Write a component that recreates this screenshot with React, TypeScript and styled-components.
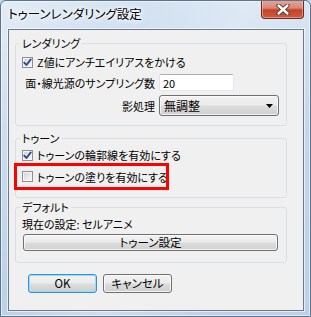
import styled, { createGlobalStyle } from 'styled-components'

const GlobalStyle = createGlobalStyle`
  html, body {
    margin: 0;
    padding: 0;
    background: #c4d7ea;
  }
  body {
    font-family: "Noto Sans CJK JP", "Noto Sans", sans-serif;
    font-feature-settings: "palt";
    color: #000;
  }
`

const Window = styled.div`
  width: 311px;
  height: 317px;
  box-sizing: border-box;
  display: flex;
  flex-direction: column;
  border: 1px solid #5d728c;
  border-radius: 6px 6px 0 0;
  background:
    linear-gradient(115deg, rgba(255,255,255,0.35) 0%, rgba(255,255,255,0) 30%, rgba(255,255,255,0.25) 55%, rgba(255,255,255,0) 80%),
    linear-gradient(180deg, #d3e2f1 0%, #c3d6ea 40%, #bcd1e7 100%);
  box-shadow: inset 0 0 0 1px rgba(255,255,255,0.55);
  overflow: hidden;
`

const TitleBar = styled.div`
  height: 28px;
  display: flex;
  align-items: flex-start;
  justify-content: space-between;
  padding: 0 6px 0 7px;
`

const Title = styled.div`
  margin-top: 5px;
  font-size: 12.5px;
  line-height: 16px;
  text-shadow: 0 0 6px #fff, 0 0 10px #fff, 0 0 3px #fff;
`

const CloseButton = styled.div`
  width: 43px;
  height: 19px;
  margin-top: -1px;
  box-sizing: border-box;
  display: flex;
  align-items: center;
  justify-content: center;
  border: 1px solid #6a2a1f;
  border-top: none;
  border-radius: 0 0 4px 4px;
  background: linear-gradient(180deg, #e5a99d 0%, #d88672 45%, #c2432b 55%, #cf5a3e 100%);
  box-shadow: inset 0 0 0 1px rgba(255,220,210,0.45);
`

const Client = styled.div`
  flex: 1;
  margin: 0 6px 5px 7px;
  display: flex;
  flex-direction: column;
  padding: 6px 16px 0 6px;
  border: 1px solid #6b7a8b;
  background: #f0f0f0;
  box-shadow: 0 0 0 1px rgba(255,255,255,0.6);
`

const Group = styled.fieldset<{ $top: number; $bottom: number; $pt: number }>`
  margin: ${p => p.$top}px 0 0 0;
  padding: ${p => p.$pt}px 0 ${p => p.$bottom}px 6px;
  border: 1px solid #d5dfe5;
  border-radius: 3px;
  min-width: 0;
`

const Legend = styled.legend`
  padding: 0 2px;
  margin-left: -2px;
  font-size: 11px;
  line-height: 14px;
`

const GroupBody = styled.div<{ $gap: number }>`
  display: flex;
  flex-direction: column;
  gap: ${p => p.$gap}px;
`

const CheckRow = styled.div<{ $marked?: boolean }>`
  display: flex;
  align-items: center;
  gap: 4px;
  height: ${p => (p.$marked ? 21 : 16)}px;
  font-size: 11px;
  white-space: nowrap;
  ${p =>
    p.$marked &&
    `
    box-sizing: border-box;
    width: 149px;
    margin-left: -5px;
    padding-left: 5px;
    outline: 3px solid #ff0000;
  `}
`

const Box = styled.span`
  width: 11px;
  height: 11px;
  box-sizing: border-box;
  flex: none;
  display: flex;
  align-items: center;
  justify-content: center;
  border: 1px solid #8e8f8f;
  background: linear-gradient(135deg, #cfd2d6 0%, #e8eaec 60%, #fafafa 100%);
  box-shadow: inset 0 0 0 1px #f5f5f5;
`

const FieldRow = styled.div<{ $h: number }>`
  display: grid;
  grid-template-columns: 133px auto;
  column-gap: 4px;
  align-items: center;
  height: ${p => p.$h}px;
  font-size: 11px;
`

const FieldLabel = styled.span`
  justify-self: end;
  white-space: nowrap;
`

const TextInput = styled.input`
  width: 75px;
  height: 17px;
  box-sizing: border-box;
  margin: 0;
  padding: 0 3px;
  border: 1px solid;
  border-color: #abadb3 #e3e9ef #e3e9ef #e2e3ea;
  border-radius: 2px;
  background: #fff;
  font: inherit;
  font-size: 11px;
  color: #000;
  outline: none;
`

const Combo = styled.div`
  width: 120px;
  height: 21px;
  box-sizing: border-box;
  display: flex;
  align-items: center;
  justify-content: space-between;
  padding: 0 5px 0 4px;
  border: 1px solid #707070;
  border-radius: 3px;
  background: linear-gradient(180deg, #f2f2f2 0%, #ebebeb 48%, #dddddd 52%, #cfcfcf 100%);
  box-shadow: inset 0 0 0 1px rgba(255,255,255,0.7);
  font-size: 12px;
`

const Line = styled.div`
  height: 16px;
  display: flex;
  align-items: center;
  font-size: 11px;
  white-space: nowrap;
`

const Button = styled.button<{ $w: number; $h: number; $default?: boolean }>`
  width: ${p => p.$w}px;
  height: ${p => p.$h}px;
  box-sizing: border-box;
  margin: 0;
  padding: 0;
  border: 1px solid ${p => (p.$default ? '#3a8fd0' : '#707070')};
  border-radius: 3px;
  background: linear-gradient(180deg, #f2f2f2 0%, #ebebeb 48%, #dddddd 52%, #cfcfcf 100%);
  box-shadow: inset 0 0 0 1px ${p => (p.$default ? '#8fe0fb' : 'rgba(255,255,255,0.75)')};
  font-family: inherit;
  font-feature-settings: "palt";
  font-size: 11.5px;
  color: #000;
  line-height: 1;
`

const WideButton = styled(Button)`
  margin-left: 1px;
`

const ButtonRow = styled.div`
  display: flex;
  gap: 6px;
  margin-top: 11px;
  padding-left: 13px;
`

function CheckBox({ checked }: { checked?: boolean }) {
  return (
    <Box>
      {checked && (
        <svg width="9" height="9" viewBox="0 0 9 9">
          <path d="M1.2 4.6 L3.5 7 L7.8 1.4" fill="none" stroke="#2b4794" strokeWidth="1.8" strokeLinecap="round" strokeLinejoin="round" />
        </svg>
      )}
    </Box>
  )
}

export default function App() {
  return (
    <>
      <GlobalStyle />
      <Window>
        <TitleBar>
          <Title>トゥーンレンダリング設定</Title>
          <CloseButton>
            <svg width="14" height="11" viewBox="0 0 14 11">
              <path d="M2.5 1.5 L11.5 9.5 M11.5 1.5 L2.5 9.5" stroke="#4a2a24" strokeWidth="4.2" strokeLinecap="round" />
              <path d="M2.5 1.5 L11.5 9.5 M11.5 1.5 L2.5 9.5" stroke="#ffffff" strokeWidth="2.4" strokeLinecap="round" />
            </svg>
          </CloseButton>
        </TitleBar>
        <Client>
          <Group $top={0} $pt={4} $bottom={9}>
            <Legend>レンダリング</Legend>
            <GroupBody $gap={4}>
              <CheckRow>
                <CheckBox checked />
                <span>Z値にアンチエイリアスをかける</span>
              </CheckRow>
              <FieldRow $h={17}>
                <FieldLabel>面・線光源のサンプリング数</FieldLabel>
                <TextInput value="20" readOnly />
              </FieldRow>
              <FieldRow $h={21}>
                <FieldLabel>影処理</FieldLabel>
                <Combo>
                  <span>無調整</span>
                  <svg width="7" height="4" viewBox="0 0 7 4">
                    <path d="M0 0 H7 L3.5 4 Z" fill="#000" />
                  </svg>
                </Combo>
              </FieldRow>
            </GroupBody>
          </Group>
          <Group $top={5} $pt={2} $bottom={10}>
            <Legend>トゥーン</Legend>
            <GroupBody $gap={3}>
              <CheckRow>
                <CheckBox checked />
                <span>トゥーンの輪郭線を有効にする</span>
              </CheckRow>
              <CheckRow $marked>
                <CheckBox />
                <span>トゥーンの塗りを有効にする</span>
              </CheckRow>
            </GroupBody>
          </Group>
          <Group $top={2} $pt={2} $bottom={11}>
            <Legend>デフォルト</Legend>
            <GroupBody $gap={2}>
              <Line>現在の設定: セルアニメ</Line>
              <WideButton $w={255} $h={17}>トゥーン設定</WideButton>
            </GroupBody>
          </Group>
          <ButtonRow>
            <Button $w={69} $h={19} $default>OK</Button>
            <Button $w={69} $h={19}>キャンセル</Button>
          </ButtonRow>
        </Client>
      </Window>
    </>
  )
}
